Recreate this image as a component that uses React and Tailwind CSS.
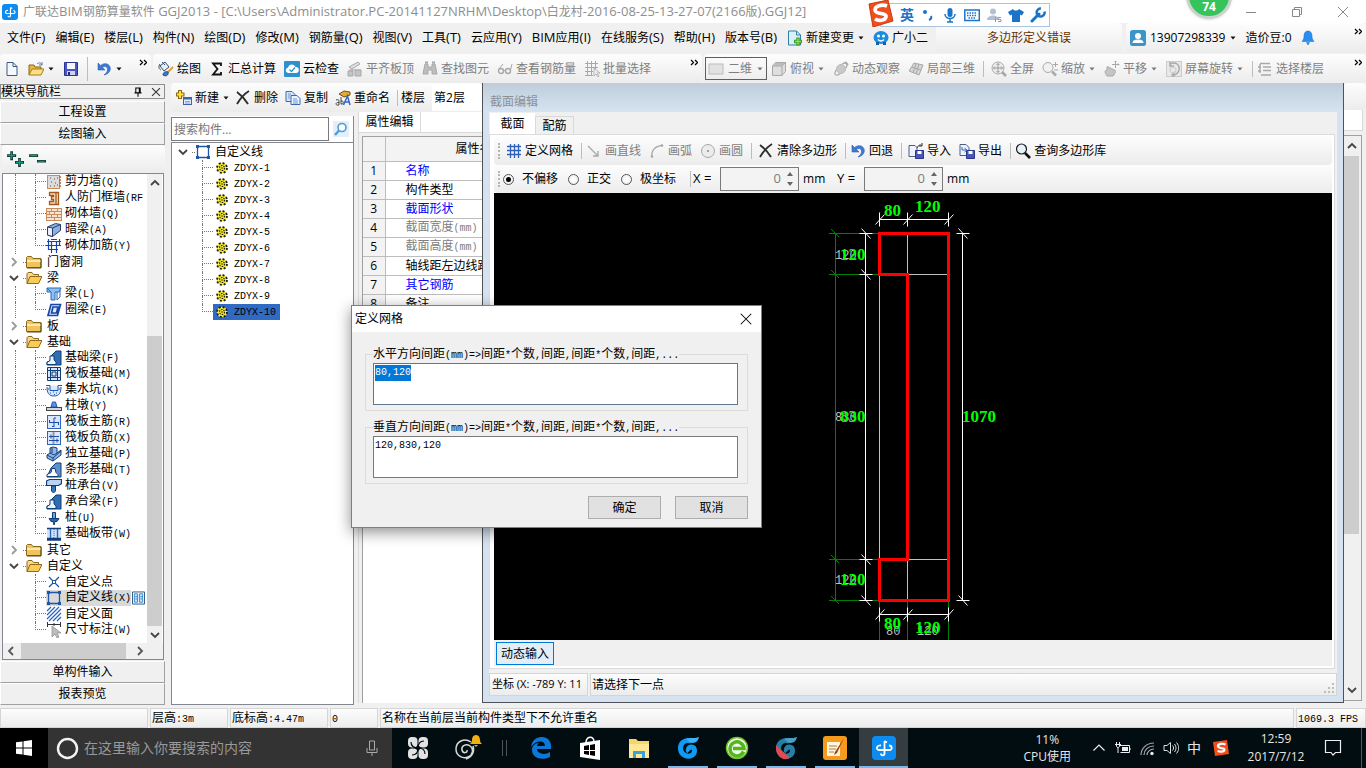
import React, { useEffect, useRef } from "react";

const UI = "font-['Open_Sans','Noto_Sans_CJK_SC',sans-serif]";
const GRAD = "bg-linear-to-b from-[#fdfdfd] to-[#ececec]";
const BAR = GRAD + " rounded-sm";

/* Splits a label into CJK and Latin runs so that each script keeps its own size */
function Runs({ children, latin }) {
  const runs = children.match(/[\x00-\x7f]+|[^\x00-\x7f]+/g) || [];
  return (
    <span className="whitespace-nowrap">
      {runs.map((r, i) =>
        r.charCodeAt(0) < 128 ? <span key={i} className={"whitespace-pre " + latin}>{r}</span> : <span key={i}>{r}</span>
      )}
    </span>
  );
}
const Song = ({ children }) => <Runs latin="font-['Liberation_Mono',monospace] text-[10px]">{children}</Runs>;
const Hei = ({ children }) => <Runs latin="text-[13px]">{children}</Runs>;

function Svg({ size = 16, children, className = "" }) {
  return (
    <svg width={size} height={size} viewBox="0 0 16 16" fill="none" className={"shrink-0 " + className} aria-hidden="true">
      {children}
    </svg>
  );
}

const G = "#a8a8a8";
const B = "#1f56a8";
const ICONS = {
  page: <path d="M3 1.500h6l4 4v9H3z M9 1.500v4h4" fill="#f4f9ff" stroke="#3c5a80" />,
  open: (
    <>
      <path d="M1 14V4h5l1 2h6v3" fill="#e9b64a" stroke="#8a6410" />
      <path d="M1 14l3-6h12l-3 6z" fill="#ffdf83" stroke="#a87a16" />
      <path d="M9 3c2-2 4-1 5 1m0-3v3h-3" stroke="#5578a8" />
    </>
  ),
  save: (
    <>
      <path d="M1.500 1.500h13v13h-13z" fill="#4a55c8" stroke="#2c348c" />
      <path d="M4 2h8v6H4z" fill="#f3f5ff" />
      <path d="M4 10h8v4H4z" fill="#cfd4ea" />
      <path d="M5 11h2v3H5z" fill="#23297a" />
    </>
  ),
  undo: <path d="M2 2v7h7L6.500 6.500C9 4.500 12 6 11.500 9c-.3 2-1.500 3.500-3.500 5 4-.8 6.500-3.500 6.300-6.800C14 3 9 1 4.500 4.500z" fill="#3f79d6" stroke="#2b5cae" strokeWidth=".6" />,
  brush: (
    <>
      <path d="M2 5l5-4 4 5-5 4z" fill="#e6eef6" stroke="#35506f" />
      <path d="M2 3C0 6 1 8 3 9M4 1l3 3" stroke="#35506f" />
      <path d="M15 6l-6 6" stroke="#e0a030" strokeWidth="2" />
      <path d="M5 14c0-3 3-4 5-3 1 3-2 5-5 3z" fill="#3b78c8" stroke="#234e8a" />
    </>
  ),
  sigma: <path d="M12 5V2.500H4L8.500 8 4 13.500h8V11" stroke="#111" strokeWidth="1.800" />,
  cloud: (
    <>
      <rect width="16" height="16" rx="1" fill="#2c92cf" />
      <path d="M4 12a2.800 2.800 0 0 1 0-5.500 4 4 0 0 1 7.600-.5A3 3 0 0 1 12 12z" fill="#fff" />
      <path d="M5.500 8.500l2 2 3.500-4" stroke="#2c92cf" strokeWidth="1.200" />
    </>
  ),
  slab: (
    <>
      <path d="M2 6l9-5 2 2-8 5z M2 9h12M5 8v3" fill="#ddd" stroke={G} />
      <path d="M1 10h5v5H1z M8 9h6v6H8z" fill="#c4c4c4" stroke={G} />
    </>
  ),
  binoc: (
    <>
      <path d="M3 3h3v3h4V3h3l2 10h-5V9H6v4H1z" fill="#bdbdbd" stroke={G} />
      <path d="M3 1.500h3M10 1.500h3" stroke={G} strokeWidth="2" />
    </>
  ),
  glasses: (
    <>
      <circle cx="4" cy="10" r="2.500" stroke={G} strokeWidth="1.400" />
      <circle cx="11" cy="10" r="2.500" stroke={G} strokeWidth="1.400" />
      <path d="M2 8L6 3M13.500 9L15 3M6.500 9.500h2" stroke={G} />
    </>
  ),
  batch: (
    <>
      <path d="M1 2.500h13M1 6.500h13M1 10.500h8M1 14.500h8M3.500 0v15M7.500 0v15M11.500 0v8" stroke={G} />
      <path d="M10 7v8l2-2 2 3 1-1-2-3h3z" fill="#eee" stroke={G} strokeWidth=".8" />
    </>
  ),
  flat: <rect x="1" y="3" width="14" height="10" fill="#e2e2e2" stroke="#bbb" />,
  cube: (
    <>
      <path d="M1.500 5l3-3.500h10v9l-3.500 4H1.500z" fill="#dedede" stroke={G} />
      <path d="M1.500 5h9.500v9.500M11 5l3.500-3.500" stroke={G} />
      <path d="M2 5h9l3-3H5z" fill="#bbb" />
    </>
  ),
  orbit: (
    <>
      <ellipse cx="8" cy="8" rx="8" ry="3" transform="rotate(-45 8 8)" stroke={G} />
      <circle cx="8" cy="8" r="4.500" fill="#c9c9c9" stroke="#bbb" />
      <path d="M12 1l3 3" stroke={G} strokeWidth="2" />
    </>
  ),
  part3d: (
    <>
      <path d="M1 10l5-8 9 2-4 10z" fill="#d5d5d5" stroke={G} />
      <path d="M4 6l9 3M8 3L5 12M11 3L8 13" stroke={G} />
    </>
  ),
  full: (
    <>
      <circle cx="7" cy="7" r="6" fill="#eee" stroke={G} />
      <path d="M7 2.500v9M2.500 7h9M5.500 4L7 2.500 8.500 4M5.500 10L7 11.500 8.500 10M4 5.500L2.500 7 4 8.500M10 5.500L11.500 7 10 8.500" stroke="#999" />
      <path d="M11 11l4 4" stroke={G} strokeWidth="2.500" />
    </>
  ),
  zoomio: (
    <>
      <circle cx="6" cy="6.500" r="5" fill="#f1f1f1" stroke={G} />
      <path d="M10 10.500l4 4" stroke={G} strokeWidth="2.500" />
      <path d="M11 3.500h5M13.500 1v5M12 9h4" stroke={G} />
    </>
  ),
  pan: (
    <>
      <path d="M3 15c-3-4-2-6 0-6V6c1-1 2 0 2 1 1-1 2 0 2 1 1-1 2 0 2 1 2-1 3 1 2 3l-2 3z" fill="#c5c5c5" stroke={G} />
      <path d="M11.500 0v7M8 3.500h7M10.500 1l1-1 1 1M14 2.500l1 1-1 1" stroke={G} />
    </>
  ),
  rot: (
    <>
      <rect x=".5" y=".5" width="15" height="15" fill="#e8e8e8" stroke="#ccc" />
      <path d="M4 3c6-3 10 1 9 6-1 3-3 5-6 5M4 1v4h4M9 11l-3 3 2 2" stroke={G} strokeWidth="1.400" />
      <circle cx="7" cy="9" r="3" stroke="#ccc" />
    </>
  ),
  floors: <path d="M3 2.500h10M6 6h8M6 9.500h8M4 14h10M3 3v9M1 6h3M1 10h3" stroke={G} strokeWidth="1.400" />,
  newitem: (
    <>
      <path d="M4 0v9M0 4.500h8.500" stroke="#8a6a10" strokeWidth="4" />
      <path d="M4 1v7M1 4.500h6.500" stroke="#ffdf3c" strokeWidth="2" />
      <rect x="7.500" y="7.500" width="8" height="7" fill="#e4eefb" stroke="#3d64a8" />
      <path d="M7.500 8.500h8" stroke="#3d64a8" strokeWidth="2" />
      <path d="M9 11.500h5M9 13h5" stroke="#8aa6d0" />
    </>
  ),
  del: <path d="M2 2c4 3 8 7 11 12M14 1C9 4 5 9 2 14" stroke="#2d2d2d" strokeWidth="1.900" />,
  copy: (
    <>
      <path d="M1 1.500h6l3 3v7H1z" fill="#d7e6fb" stroke="#3a69b4" />
      <path d="M6 5.500h6l3 3v6H6z" fill="#e9f2ff" stroke="#3a69b4" />
      <path d="M8 9h4M8 11h5M8 13h5M3 4h3M3 6h2M3 8h2" stroke="#6f98d6" />
    </>
  ),
  rename: (
    <>
      <path d="M4 4l5-3 6 1v3l-6 2z" fill="#e0a93a" stroke="#6f5315" />
      <path d="M8.500 15l4-9 2.500 9M9.500 12h5" stroke="#3667c0" strokeWidth="1.500" />
      <path d="M1 10c2-1 3 0 3 1v4c-4 1-4-3 0-2.500M6 7v7c3 1 3-4 0-3" stroke="#444" />
    </>
  ),
  grid: <path d="M1 3.500h14M1 7.500h14M1 11.500h14M4.500 1v14M8.500 1v14M12.500 1v14" stroke="#2d62b8" strokeWidth="1.300" />,
  line: <path d="M2 3l10 10M12 8v5H7" stroke={G} strokeWidth="1.300" />,
  arc: (
    <>
      <path d="M3 14C2 8 6 3 13 2.500" stroke={G} strokeWidth="1.300" />
      <circle cx="3" cy="13.500" r="1.300" fill={G} />
      <circle cx="13" cy="2.500" r="1.300" fill={G} />
    </>
  ),
  circle: (
    <>
      <circle cx="8" cy="8" r="6.500" fill="#ececec" stroke={G} />
      <circle cx="8" cy="8" r="1" fill="#888" />
    </>
  ),
  imp: (
    <>
      <path d="M1 2.500h6l2 2v9H1z" fill="#edf4ff" stroke="#4b5d80" />
      <path d="M7.500 7.500h8v8h-8z" fill="#4a55b8" stroke="#2c348c" />
      <path d="M9.500 8h4v3h-4z" fill="#fff" />
      <path d="M9 5c1-3 4-4 5-2M14 0v3h-3" stroke="#333" />
    </>
  ),
  exp: (
    <>
      <path d="M1 1.500h6l3 3v8H1z" fill="#edf4ff" stroke="#4b5d80" />
      <path d="M7.500 7.500h8v8h-8z" fill="#4a55b8" stroke="#2c348c" />
      <path d="M9.500 8h4v3h-4z" fill="#fff" />
      <path d="M3 4v3h4M5.500 5L8 7 5.500 9" stroke="#3a69b4" />
    </>
  ),
  find: (
    <>
      <circle cx="6.500" cy="6" r="5" fill="#e6f3fb" stroke="#1c1c1c" strokeWidth="1.200" />
      <path d="M10 10l5 5" stroke="#111" strokeWidth="2.600" />
    </>
  ),
  folder: (
    <>
      <path d="M.5 13.500v-10l1-1h4l1.500 2h8v9z" fill="#f2c35a" stroke="#8f6a1a" />
      <path d="M1 6h14v2H1z" fill="#ffe9ae" />
      <path d="M15 5v9H1" stroke="#5d4410" />
    </>
  ),
  folderOpen: (
    <>
      <path d="M1 13.500v-10l1-1h4l1.500 2h5v3" fill="#f6d98c" stroke="#8f6a1a" />
      <path d="M1 13.500l3-7h12l-3.500 7z" fill="#f9cb58" stroke="#8f6a1a" />
    </>
  ),
  wall: (
    <>
      <rect x="1.500" y="1.500" width="12" height="13" fill="#dcdcdc" stroke="#d08a50" />
      <path d="M4 4h1M8 5h1M11 4h1M5 8h1M9 9h1M4 12h1M8 12h1M11 11h1" stroke="#555" />
      <path d="M13 3h2M13 6h2M13 9h2M13 12h2" stroke="#c06020" strokeWidth="1.500" />
    </>
  ),
  door: <path d="M3.500 2.500h9v12h-9v-3h4v-2h-2v-3h2v-1h-4z M10 3v11" fill="#f6dcc0" stroke="#a5561c" strokeWidth="1.300" />,
  brick: (
    <>
      <rect x=".5" y="2.500" width="15" height="12" fill="#f9e4d2" stroke="#c98a5e" />
      <path d="M1 5.500h14M1 8.500h14M1 11.500h14M5.500 3v2.500M11.500 3v2.500M8.500 5.500v3M3.500 5.500v3M5.500 8.500v3M11.500 8.500v3M8.500 11.500v3" stroke="#c98a5e" />
    </>
  ),
  hidden: (
    <>
      <path d="M1.500 5l8-3.500 5 1v6l-8 6-5-1.500z" fill="#8fb0dc" stroke="#243f70" />
      <path d="M1.500 5l5 1v8.500l-5-1.500z" fill="#e9f0fa" stroke="#243f70" />
      <path d="M6.500 6l8-3.500" stroke="#243f70" />
    </>
  ),
  rebar: <path d="M2.500 1v11M5.500 3v12M10.500 3v12M13.500 1v7M1 3.500h14M0 7.500h15M3 11.500h9M5 1.500h6" stroke="#1846a8" strokeWidth="1.200" />,
  beam: (
    <>
      <path d="M1 2h14l-2 4H9v8H5V6H1z" fill="#8dc0f0" stroke="#2b69b8" />
      <path d="M11 6v8l3-3V4M1 2l4 4" stroke="#2b69b8" />
    </>
  ),
  ring: <path d="M5 2.500h9.500l-3 11H2z M7 5h5l-1.500 6h-5z" fill="#dceaff" stroke="#1846a8" strokeWidth="1.700" />,
  fbeam: (
    <>
      <path d="M5 6l5-5h5v14H1v-3l3-1z" fill="#2f6cb0" stroke="#123e78" />
      <path d="M1 14.500v-2l3-2V6h4v4l2 2v2.500z" fill="#eaf3ff" stroke="#123e78" />
    </>
  ),
  raft: <path d="M1.500 1.500h13v13h-13z M1 4.500h14M1 11.500h14M4.500 1v14M11.500 1v14M6 6h4v4H6z" fill="#d8e6fb" stroke="#123e78" />,
  pit: (
    <>
      <path d="M0 3.500h4v5h8v-5h4M1 5c0 6 2 9 7 9s7-3 7-9" fill="#dbe9ff" stroke="#1d55b0" />
      <path d="M4 11h1M7 10h1M10 11h1M8 12.500h1M13 7h1M2 7h1" stroke="#1d55b0" />
    </>
  ),
  pier: (
    <>
      <path d="M5 9l1.500-5h3L11 9z" fill="#5b94e0" stroke="#1d55b0" />
      <rect x=".5" y="9.500" width="15" height="3" fill="#d6d6d6" stroke="#444" />
    </>
  ),
  mainbar: (
    <>
      <rect x="1.500" y="1.500" width="13" height="13" fill="#dbe7fb" stroke="#2c62c0" />
      <path d="M3 8.500h10M8 4v9M8 4h2M6 12.500h2M3.500 6v2.500M12.500 8.500V11" stroke="#1d4ba8" />
    </>
  ),
  negbar: (
    <>
      <rect x="1.500" y="1.500" width="13" height="13" fill="#dbe7fb" stroke="#2c62c0" />
      <path d="M7.500 2v12" stroke="#9a9a9a" strokeWidth="2" />
      <path d="M3 6.500h10M3 10.500h10M5 4.500v4M11 8.500v4" stroke="#1d4ba8" />
    </>
  ),
  single: (
    <>
      <path d="M1 9l3-2V2l3-1 4 1v5l4-3v5l-8 6-6-3z" fill="#8fb8e8" stroke="#123e78" />
      <path d="M1 9l6 3 8-7M4 7l4 2 3-2M7 12v3M6 2v5" stroke="#123e78" />
    </>
  ),
  strip: (
    <>
      <path d="M5 6l5-5h5v14H1z" fill="#5d8fca" stroke="#123e78" />
      <path d="M1 14.500v-2l4-2 1-4h3l1 4 2 2v2z" fill="#fff" stroke="#123e78" />
    </>
  ),
  cap: (
    <>
      <path d="M.5 3l3-1.500h12v4l-3 2H.5z" fill="#b8d3f4" stroke="#123e78" strokeWidth="1.200" />
      <path d="M5.500 8h4v5l-2 2-2-2z" fill="#3c78c0" stroke="#123e78" />
    </>
  ),
  pile: (
    <>
      <path d="M6.500 2.500h3v6h-3z" fill="#6ea3e0" stroke="#123e78" />
      <path d="M3 8.500h10l-2 3H9l-1 3.500-1-3.500H5z" fill="#2b62a8" stroke="#123e78" />
    </>
  ),
  band: (
    <>
      <rect x="1" y="2" width="14" height="12" fill="#cfe2ff" />
      <path d="M1 2.500h14M1 12.500h14M1 14h14" stroke="#123e78" strokeWidth="1.500" />
      <path d="M4.500 3v9M11.500 3v9" stroke="#2c62c0" strokeWidth="1.400" />
      <path d="M8 3v9" stroke="#2c62c0" strokeDasharray="1 1" />
    </>
  ),
  cpoint: (
    <>
      <path d="M3 3l10 10M13 3L3 13" stroke={B} strokeWidth="1.300" />
      <rect x="6.500" y="6.500" width="3" height="3" fill="#fff" stroke={B} />
    </>
  ),
  cline: (
    <>
      <path d="M2.500 2.500h11v11h-11z" stroke={B} strokeWidth="1.300" />
      <path d="M1 1h3v3H1zM12 1h3v3h-3zM1 12h3v3H1zM12 12h3v3h-3z" fill={B} />
    </>
  ),
  carea: <path d="M1 5l4-4M1 9l8-8M1 13L13 1M3 15L15 3M7 15l8-8M11 15l4-4" stroke="#2c62c0" strokeWidth="1.200" />,
  dim: (
    <>
      <path d="M1.500 0v5M14.500 0v5M1 2.500h14M8 1v3" stroke="#333" />
      <path d="M6 4v11l3-3 2 4 2-1-2-4h4z" fill="#bdbdbd" stroke="#8a8a8a" strokeWidth=".7" />
    </>
  ),
  gear: (
    <>
      <circle cx="8" cy="8" r="7" fill="#f4ea2a" />
      <circle cx="8" cy="8" r="6.600" stroke="#151515" strokeWidth="2.400" strokeDasharray="2.600 2.580" />
      <circle cx="8" cy="8" r="3.300" stroke="#151515" strokeDasharray="2 1.450" strokeWidth="1.500" />
      <circle cx="8" cy="8" r="1" fill="#151515" />
    </>
  ),
  newchg: (
    <>
      <path d="M1.500 1h8l4 4v10h-12z" fill="#d9f0fb" stroke="#2d7ea8" />
      <path d="M9.500 1v4h4" stroke="#2d7ea8" />
      <path d="M11 7.500v8M7 11.500h8" stroke="#3f9c24" strokeWidth="3.500" />
      <path d="M11 8.500v6M8 11.500h6" stroke="#86d95c" strokeWidth="1.500" />
    </>
  ),
  robot: (
    <>
      <ellipse cx="8" cy="7.500" rx="7.500" ry="6.500" fill="#1a8de0" />
      <path d="M3 12h3v3H3zM10 12h3v3h-3z" fill="#0d62b0" />
      <circle cx="5.500" cy="6" r="1.500" fill="#fff" />
      <circle cx="10.500" cy="6" r="1.500" fill="#fff" />
      <path d="M5 9.500c2 2 4 2 6 0" stroke="#fff" strokeWidth="1.200" />
    </>
  ),
  user: (
    <>
      <rect width="16" height="16" rx="2.500" fill="#3b95c9" />
      <circle cx="8" cy="6" r="3" fill="#fff" />
      <path d="M2.500 13c0-3 3-3.500 5.500-3.500s5.500.5 5.500 3.500z" fill="#fff" />
    </>
  ),
  bell: <path d="M8 1c-3 0-4 2.500-4 5 0 3-1 4-2 5.500h12C13 10 12 9 12 6c0-2.500-1-5-4-5zM6.500 12.500L8 15l1.500-2.500z" fill="#2a8df0" stroke="#1a6cc8" strokeWidth=".5" />,
  ggj: (
    <>
      <rect width="16" height="16" rx="3" fill="#0c8bf0" />
      <path d="M6 6.500C3.500 6 2.500 9 4.500 9.500h7c2 0 2-3-.2-3M8.500 3.500v8.300c0 1.600-2.500 1.600-2.500 0M8.500 3.500l1.800 1" stroke="#fff" strokeWidth="1.200" />
    </>
  ),
};
const Icon = ({ n, size }) => <Svg size={size}>{ICONS[n]}</Svg>;

const Caret = ({ dim }) => (
  <svg width="8" height="8" viewBox="0 0 8 8" className="shrink-0" aria-hidden="true">
    <path d="M1.500 2.500h5L4 5.500z" fill={dim ? "#777" : "#111"} />
  </svg>
);
const More = () => (
  <svg width="8" height="8" viewBox="0 0 8 8" fill="none" className="shrink-0" aria-hidden="true">
    <path d="M1 1l2.500 2.500L1 6M5 1l2.500 2.500L5 6" stroke="#000" strokeWidth="1.300" />
  </svg>
);
const Sep = ({ h = "h-4" }) => <span className={"w-px shrink-0 bg-[#bdbdbd] " + h} />;
const Chev = ({ d = "down", c = "#444" }) => {
  const p = { down: "M2 4l4 4 4-4", up: "M2 8l4-4 4 4", left: "M8 2L4 6l4 4", right: "M4 2l4 4-4 4" }[d];
  return (
    <svg width="12" height="12" viewBox="0 0 12 12" fill="none" className="shrink-0" aria-hidden="true">
      <path d={p} stroke={c} strokeWidth="1.800" />
    </svg>
  );
};

function Tool({ icon, children, dim, caret }) {
  return (
    <button className={"flex shrink-0 items-center gap-[3px] whitespace-nowrap " + (dim ? "text-[#7f7f7f]" : "text-black")}>
      {icon && <Icon n={icon} />}
      {children}
      {caret && <Caret dim={dim} />}
    </button>
  );
}

function TitleBar() {
  return (
    <header className="flex h-[23px] shrink-0 items-center gap-[5px] bg-white pl-0.5 text-[#8e8e8e]">
      <Icon n="ggj" />
      <h1 className="flex-1 overflow-hidden">
        <Hei>广联达BIM钢筋算量软件 GGJ2013 - [C:\Users\Administrator.PC-20141127NRHM\Desktop\白龙村-2016-08-25-13-27-07(2166版).GGJ12]</Hei>
      </h1>
      <div className="flex w-[138px] shrink-0 items-center">
        {["M3 8.500h10", "M3.500 5.500h7v7h-7zM5.500 5V3.500h7v7H11", "M3 3l10 10M13 3L3 13"].map((d, i) => (
          <button key={i} aria-label={["最小化", "还原", "关闭"][i]} className="flex w-[46px] justify-center">
            <Svg><path d={d} stroke="#888" /></Svg>
          </button>
        ))}
      </div>
    </header>
  );
}

function MenuBar() {
  const items = ["文件(F)", "编辑(E)", "楼层(L)", "构件(N)", "绘图(D)", "修改(M)", "钢筋量(Q)", "视图(V)", "工具(T)", "云应用(Y)", "BIM应用(I)", "在线服务(S)", "帮助(H)", "版本号(B)"];
  return (
    <nav className="flex h-[30px] shrink-0 items-center bg-[#f0f0f0]">
      <div className="flex shrink-0 items-center gap-[10px] pl-[7px]">
        {items.map((t) => (
          <button key={t}><Hei>{t}</Hei></button>
        ))}
      </div>
      <div className="ml-2.5 flex w-[149px] shrink-0 items-center gap-2">
        <button className="flex items-center gap-[3px] whitespace-nowrap"><Icon n="newchg" />新建变更<Caret /></button>
        <button className="flex items-center gap-[3px] whitespace-nowrap"><Icon n="robot" />广小二</button>
      </div>
      <div className={"flex h-full flex-1 items-center justify-center whitespace-nowrap text-[#663300] " + BAR}><Song>多边形定义错误</Song></div>
      <div className={"ml-1 flex h-full w-60 shrink-0 items-center gap-1 pl-1 whitespace-nowrap " + BAR}>
        <Icon n="user" />
        <button className="flex items-center gap-1">13907298339 <Caret /></button>
        <span className="ml-1">造价豆:0</span>
        <button aria-label="通知" className="ml-1"><Icon n="bell" /></button>
        <button aria-label="更多" className="mr-1 mb-3 ml-auto"><More /></button>
      </div>
    </nav>
  );
}

function MainToolbar() {
  return (
    <div className="flex h-[30px] shrink-0 items-stretch gap-0.5 pt-px">
      <div className={"flex w-[151px] shrink-0 items-center gap-2 pl-1 " + BAR}>
        <Tool icon="page" />
        <Tool icon="open" caret />
        <Tool icon="save" />
        <Sep h="h-6" />
        <Tool icon="undo" caret />
        <button aria-label="更多" className="mr-1 mb-3 ml-auto"><More /></button>
      </div>
      <div className={"flex w-[549px] shrink-0 items-center gap-2 pl-[5px] " + BAR}>
        <Tool icon="brush">绘图</Tool>
        <Tool icon="sigma">汇总计算</Tool>
        <Tool icon="cloud">云检查</Tool>
        <Tool icon="slab" dim>平齐板顶</Tool>
        <Tool icon="binoc" dim>查找图元</Tool>
        <Tool icon="glasses" dim>查看钢筋量</Tool>
        <Tool icon="batch" dim>批量选择</Tool>
        <button aria-label="更多" className="mr-1 mb-3 ml-auto"><More /></button>
      </div>
      <div className={"flex flex-1 items-center gap-2 overflow-hidden pl-px " + BAR}>
        <label className="-mr-1 flex h-[23px] w-[62px] shrink-0 items-center border border-[#5f5f5f] pl-0.5 text-[#7f7f7f]">
          <Icon n="flat" />
          <select aria-label="视图模式" className="w-8 appearance-none bg-transparent pl-1"><option>二维</option></select>
          <Caret dim />
        </label>
        <Tool icon="cube" dim caret>俯视</Tool>
        <Tool icon="orbit" dim>动态观察</Tool>
        <Tool icon="part3d" dim>局部三维</Tool>
        <Sep />
        <span className="-ml-px"><Tool icon="full" dim>全屏</Tool></span>
        <Tool icon="zoomio" dim caret>缩放</Tool>
        <Tool icon="pan" dim caret>平移</Tool>
        <Tool icon="rot" dim caret>屏幕旋转</Tool>
        <Sep />
        <span className="-ml-1"><Tool icon="floors" dim>选择楼层</Tool></span>
        <button aria-label="更多" className="mr-1 mb-3 ml-auto"><More /></button>
      </div>
    </div>
  );
}

const TREE = [
  { kids: [["wall", "剪力墙(Q)"], ["door", "人防门框墙(RF"], ["brick", "砌体墙(Q)"], ["hidden", "暗梁(A)"], ["rebar", "砌体加筋(Y)"]] },
  { name: "门窗洞" },
  { name: "梁", kids: [["beam", "梁(L)"], ["ring", "圈梁(E)"]] },
  { name: "板" },
  {
    name: "基础",
    kids: [["fbeam", "基础梁(F)"], ["raft", "筏板基础(M)"], ["pit", "集水坑(K)"], ["pier", "柱墩(Y)"], ["mainbar", "筏板主筋(R)"], ["negbar", "筏板负筋(X)"], ["single", "独立基础(P)"], ["strip", "条形基础(T)"], ["cap", "桩承台(V)"], ["fbeam", "承台梁(F)"], ["pile", "桩(U)"], ["band", "基础板带(W)"]],
  },
  { name: "其它" },
  { name: "自定义", tail: true, kids: [["cpoint", "自定义点"], ["cline", "自定义线(X)"], ["carea", "自定义面"], ["dim", "尺寸标注(W)"]] },
];

const Branch = ({ last }) => (
  <span className="flex h-4 w-[11px] shrink-0 flex-col">
    <span className="h-2 border-b border-l border-dotted border-[#777]" />
    {!last && <span className="h-2 border-l border-dotted border-[#777]" />}
  </span>
);

function NavPanel() {
  const bar = "flex h-[22px] shrink-0 items-center justify-center border border-white border-r-[#a0a0a0] border-b-[#a0a0a0] bg-[#f0f0f0]";
  return (
    <aside className="flex w-[165px] shrink-0 flex-col pt-px">
      <div className="flex h-[15px] shrink-0 items-center border border-[#8d8d8d]">
        <h2 className="flex-1 leading-3">模块导航栏</h2>
        <button aria-label="固定" className="mr-1"><Svg size={14}><path d="M4 9h8M5.500 9V3.500h5V9M9.500 4v5M8 9v4.500" stroke="#000" strokeWidth="1.200" /></Svg></button>
        <button aria-label="关闭" className="mr-px"><Svg size={14}><path d="M3.500 3.500l9 9M12.500 3.500l-9 9" stroke="#333" strokeWidth="1.200" /></Svg></button>
      </div>
      <button className={bar + " mt-0.5"}>工程设置</button>
      <button className={bar}>绘图输入</button>
      <div className={"ml-0.5 flex h-[28px] shrink-0 items-center gap-1 pl-1 " + BAR}>
        <button aria-label="全部展开"><Svg size={18}><path d="M1 5h8M5 1v8M8 11h8M12 7v8" stroke="#0a3a30" strokeWidth="2.400" /><path d="M2 5h6M5 2v6M9 11h6M12 8v6" stroke="#1a9a84" /></Svg></button>
        <button aria-label="全部折叠"><Svg size={18}><path d="M1 5h8M8 10h8" stroke="#0a3a30" strokeWidth="2.400" /><path d="M2 5h6M9 10h6" stroke="#1a9a84" /></Svg></button>
      </div>
      <div className="mr-px ml-0.5 flex min-h-0 flex-1 flex-col border border-[#828790] bg-white">
        <div className="flex min-h-0 flex-1">
          <ul className="flex-1 overflow-hidden leading-4">
            {TREE.map((g, gi) => (
              <li key={gi}>
                {g.name && (
                  <div className="flex h-4 items-center pl-[5px]">
                    <Chev d={g.kids ? "down" : "right"} c={g.kids ? "#444" : "#9a9a9a"} />
                    <span className="ml-[3px] w-[3px] border-t border-dotted border-[#777]" />
                    <Icon n={g.kids ? "folderOpen" : "folder"} />
                    <span className="ml-[5px]">{g.name}</span>
                  </div>
                )}
                {g.kids && (
                  <ul>
                    {g.kids.map(([ic, t], i) => {
                      const sel = t.startsWith("自定义线");
                      return (
                        <li key={t} className="flex h-4 items-center pl-3">
                          <span className={"h-4 w-5 shrink-0 " + (g.tail ? "" : "border-l border-dotted border-[#777]")} />
                          <Branch last={i === g.kids.length - 1} />
                          <span className={"flex h-4 items-center gap-[3px] " + (sel ? "bg-[#d9d9d9]" : "")}>
                            <Icon n={ic} />
                            <Song>{t}</Song>
                          </span>
                          {sel && (
                            <svg width="13" height="14" viewBox="0 0 14 14" className="ml-px shrink-0" aria-hidden="true">
                              <path d="M.5.500h13v13H.5z" fill="#fff" stroke="#1f4f7a" />
                              <path d="M2.500 2.500h3.500v9H2.500zM8 2.500h3.500v9H8z" fill="#cfe6fa" stroke="#2b84d0" />
                              <path d="M3.500 5.500h2M3.500 8h2M9 5.500h2M9 8h2" stroke="#2b84d0" />
                            </svg>
                          )}
                        </li>
                      );
                    })}
                  </ul>
                )}
              </li>
            ))}
          </ul>
          <div className="mr-px flex w-[15px] shrink-0 flex-col items-center bg-[#f0f0f0]">
            <span className="flex h-[17px] items-center"><Chev d="up" /></span>
            <span className="flex-9" />
            <span className="w-full flex-[18] bg-[#cdcdcd]" />
            <span className="flex h-[17px] items-center"><Chev d="down" /></span>
          </div>
        </div>
        <div className="flex h-4 shrink-0 items-center bg-[#f0f0f0] pr-[17px] pl-0.5">
          <Chev d="left" c="#555" />
          <span className="ml-1 h-full flex-1 bg-[#cdcdcd]" />
          <span className="ml-2 flex"><Chev d="right" c="#555" /></span>
        </div>
      </div>
      <button className={bar + " mt-px"}>单构件输入</button>
      <button className={bar}>报表预览</button>
    </aside>
  );
}

function ComponentList() {
  return (
    <section className="mt-1 flex w-[183px] shrink-0 flex-col">
      <div className="flex h-[26px] shrink-0 items-center border-r border-[#8a8a8a] bg-white">
        <input aria-label="搜索构件" placeholder="搜索构件..." className="h-6 w-[158px] border border-[#7a7a7a] bg-white px-0.5 outline-none placeholder:text-[#777]" />
        <button aria-label="搜索" className="ml-1 bg-[#e3f0fb]">
          <Svg><circle cx="9" cy="6.500" r="4" stroke="#4c9bdc" strokeWidth="1.600" fill="#fff" /><path d="M6 9.500L2 14" stroke="#4c9bdc" strokeWidth="2.400" /></Svg>
        </button>
      </div>
      <div className="flex-1 border border-[#828790] bg-white pt-px leading-4">
        <div className="flex h-4 items-center pl-[5px]">
          <Chev /><span className="ml-[3px] w-[3px] border-t border-dotted border-[#777]" />
          <Icon n="cline" /><span className="ml-1">自定义线</span>
        </div>
        <ul className="pl-[30px]">
          {Array.from({ length: 10 }, (_, i) => (
            <li key={i} className="flex h-4 items-center">
              <Branch last={i === 9} />
              <button className={"flex h-4 items-center gap-[6px] pr-1 pl-[3px] " + (i === 9 ? "bg-[#316ac5]" : "")}>
                <Icon n="gear" size={12} />
                <Song>{"ZDYX-" + (i + 1)}</Song>
              </button>
            </li>
          ))}
        </ul>
      </div>
    </section>
  );
}

const PROPS = [["名称", "text-[#0000ff]"], ["构件类型", ""], ["截面形状", "text-[#0000ff]"], ["截面宽度(mm)", "text-[#808080]"], ["截面高度(mm)", "text-[#808080]"], ["轴线距左边线距", ""], ["其它钢筋", "text-[#0000ff]"], ["备注", ""]];

function PropertyPanel() {
  return (
    <section className="mb-0.5 ml-1 flex min-w-0 flex-1 flex-col overflow-hidden border-l border-[#d9d9d9] bg-[#f0f0f0]">
      <div className="flex h-[21px] shrink-0 items-end border-b border-[#d9d9d9] bg-white">
        <button className="h-[21px] w-[62px] shrink-0 border-r border-[#d9d9d9] bg-white whitespace-nowrap">属性编辑</button>
      </div>
      <div className="mt-[3px] ml-[3px] flex-1 border-t border-l border-[#a0a0a0] bg-white">
        <table className="w-full table-fixed border-collapse">
          <colgroup><col className="w-[22px]" /><col /></colgroup>
          <thead>
            <tr className="h-[24px]">
              <th aria-label="序号" className="border-r border-b border-[#bdbdbd] bg-[#f3f3f3]" />
              <th className="overflow-hidden border-b border-[#bdbdbd] bg-[#f3f3f3] pl-[70px] text-left font-normal whitespace-nowrap">属性名称</th>
            </tr>
          </thead>
          <tbody>
            {PROPS.map(([t, c], i) => (
              <tr key={t} className="h-[19px]">
                <td className="border-r border-b border-[#bdbdbd] bg-[#f3f3f3] text-center leading-4">{i + 1}</td>
                <td className={"overflow-hidden border-b border-[#bdbdbd] pl-5 leading-4 whitespace-nowrap " + c}><Song>{t}</Song></td>
              </tr>
            ))}
          </tbody>
        </table>
      </div>
    </section>
  );
}

/* Section drawing: every coordinate is in canvas pixels */
function SectionCanvas() {
  const vt = (x, y) => <path key={`v${x}-${y}`} d={`M${x} ${y - 7}v14M${x - 4} ${y + 5}l9-10`} />;
  const ht = (x, y) => <path key={`h${x}-${y}`} d={`M${x - 6} ${y}h13M${x - 4} ${y - 5}l9 10`} />;
  const big = "fill-[#00ff00] font-['Liberation_Serif',serif] text-[17px] font-bold";
  const small = "fill-[#c0c0c0] font-['Liberation_Mono',monospace] text-[12px]";
  return (
    <svg className="min-h-0 w-full flex-1 bg-black" role="img" aria-label="截面草图" fill="none">
      <g stroke="#008000" shapeRendering="crispEdges">
        <path d="M341.500 40v368M335 40.500h51M335 81.500h51M335 366.500h51M335 407.500h51M385.500 408v60M413.500 408v60M454.500 408v60" />
        {[40, 81, 366, 407].map((y) => <path key={y} d={`M337 ${y - 4}l8 8`} />)}
      </g>
      <path d="M385.500 81v286M413.500 40v368M413 81.500h42M413 366.500h42" stroke="#c0c0c0" />
      <text x="341" y="66" className={small}>120</text>
      <text x="341" y="228" className={small}>830</text>
      <text x="341" y="391" className={small}>120</text>
      <text x="392" y="442" className={small}>80</text>
      <text x="423" y="442" className={small}>120</text>
      <path d="M385.500 40.500h69v367h-69v-41h28v-285h-28z" stroke="#ff0000" strokeWidth="3" />
      <g stroke="#ffffff">
        <path d="M385 26.500h70M385 421.500h70M371.500 40v368M468.500 40v368" />
        {[385.5, 413.5, 454.5].flatMap((x) => [vt(x, 26.5), vt(x, 421.5)])}
        {[40.5, 81.5, 366.5, 407.5].map((y) => ht(371.5, y))}
        {[40.5, 407.5].map((y) => ht(468.5, y))}
      </g>
      <text x="390" y="23" className={big}>80</text>
      <text x="421" y="19" className={big}>120</text>
      <text x="346" y="67" className={big}>120</text>
      <text x="346" y="229" className={big}>830</text>
      <text x="468" y="229" className={big}>1070</text>
      <text x="346" y="392" className={big}>120</text>
      <text x="390" y="436" className={big}>80</text>
      <text x="421" y="440" className={big}>120</text>
    </svg>
  );
}

const Grip = () => <span className="mr-[3px] h-4 shrink-0 border-l-2 border-dotted border-[#b5b5b5]" />;

function Spin({ id, label }) {
  return (
    <span className="flex items-center">
      <label htmlFor={id} className="w-[27px] whitespace-pre text-[13px]">{label} =</label>
      <span className="flex h-6 w-[79px] border border-[#7a7a7a] bg-[#f3f3f3]">
        <input id={id} defaultValue="0" className="w-[60px] bg-transparent text-right text-[13px] text-[#7d7d7d] outline-none" />
        <span className="flex flex-1 flex-col items-center justify-between py-1">
          <button aria-label={label + " 增加"} className="flex"><svg width="6" height="4" viewBox="0 0 6 4"><path d="M0 4h6L3 0z" fill="#666" /></svg></button>
          <button aria-label={label + " 减少"} className="flex"><svg width="6" height="4" viewBox="0 0 6 4"><path d="M0 0h6L3 4z" fill="#666" /></svg></button>
        </span>
      </span>
      <span className="ml-1 w-[34px]">mm</span>
    </span>
  );
}

function SectionWindow() {
  return (
    <section className="mb-0.5 flex w-[862px] shrink flex-col border-x border-b border-[#4f5358] bg-[#d6e2f0] px-1.5 pb-1.5">
      <h2 className="-mx-1.5 flex h-[29px] shrink-0 items-center bg-linear-to-b from-[#bfccda] to-[#d6e3f0] pt-2 pl-[7px] text-[#8c9096]">截面编辑</h2>
      <div className="flex min-h-0 flex-1 flex-col bg-[#f0f0f0]">
        <div className="flex h-[22px] shrink-0 items-end pt-0.5 pl-px">
          <button className="h-[21px] w-[45px] bg-white">截面</button>
          <button className="h-[18px] w-[39px] border border-b-0 border-[#d9d9d9] bg-[#f0f0f0]">配筋</button>
        </div>
        <div className="mr-0.5 flex min-h-0 flex-1 flex-col border border-[#dcdcdc] bg-white pt-px pr-0.5 pb-0.5 pl-1">
          <div className={"flex h-[29px] shrink-0 items-center gap-2 pl-1 " + BAR}>
            <span className="-mr-[5px] flex"><Grip /></span>
            <Tool icon="grid">定义网格</Tool>
            <Sep />
            <span className="-ml-1"><Tool icon="line" dim>画直线</Tool></span>
            <Tool icon="arc" dim>画弧</Tool>
            <Tool icon="circle" dim>画圆</Tool>
            <Sep />
            <span className="-ml-0.5"><Tool icon="del">清除多边形</Tool></span>
            <Sep />
            <span className="-ml-1"><Tool icon="undo">回退</Tool></span>
            <Sep />
            <span className="-ml-0.5"><Tool icon="imp">导入</Tool></span>
            <Tool icon="exp">导出</Tool>
            <Sep />
            <span className="-ml-1"><Tool icon="find">查询多边形库</Tool></span>
          </div>
          <div className={"flex h-[28px] shrink-0 items-center pl-1 " + BAR}>
            <Grip />
            {["不偏移", "正交", "极坐标"].map((t, i) => (
              <label key={t} className="mr-2.5 flex shrink-0 items-center gap-2 whitespace-nowrap">
                <input type="radio" name="offset" defaultChecked={i === 0} className="m-0 size-[11px] appearance-none rounded-full border border-[#555] bg-white bg-clip-content p-0.5 checked:bg-black" />
                {t}
              </label>
            ))}
            <span className="mr-0.5 ml-1 flex"><Sep /></span>
            <Spin id="off-x" label="X" />
            <Spin id="off-y" label="Y" />
          </div>
          <SectionCanvas />
          <div className="h-[26px] shrink-0 bg-[#f0f0f0] pt-0.5 pl-0.5">
            <button className="block h-[23px] w-[58px] border border-[#0078d7] bg-[#e3eef8] whitespace-nowrap">动态输入</button>
          </div>
        </div>
        <div className="mt-1 flex h-[23px] shrink-0 gap-0.5 whitespace-nowrap">
          <span className={"flex w-[99px] items-center overflow-hidden border border-[#d5d5d5] pl-0.5 text-[11px] " + GRAD}>坐标 (X: -789 Y: 11</span>
          <span className={"flex flex-1 items-center border border-[#d5d5d5] pl-px " + GRAD}>
            请选择下一点
            <svg width="12" height="12" viewBox="0 0 12 12" className="mt-1.5 mr-px ml-auto" aria-hidden="true">
              <path d="M9 1h2v2H9zM5 5h2v2H5zM9 5h2v2H9zM1 9h2v2H1zM5 9h2v2H5zM9 9h2v2H9z" fill="#bdbdbd" />
            </svg>
          </span>
        </div>
      </div>
    </section>
  );
}

function GridDialog() {
  const ref = useRef(null);
  useEffect(() => {
    ref.current.focus();
    ref.current.select();
  }, []);
  const box = "block h-[42px] w-full resize-none overflow-hidden border bg-white px-px py-px font-['Liberation_Mono',monospace] text-[10px] leading-4 outline-none selection:bg-[#0078d7] selection:text-white";
  const group = "h-[66px] border border-[#dcdcdc] pr-[9px] pb-1 pl-[7px]";
  const btn = "h-[23px] w-[73px] border border-[#adadad] bg-[#e1e1e1]";
  const hint = "方向间距(mm)=>间距*个数,间距,间距*个数,间距,...";
  return (
    <div role="dialog" aria-label="定义网格" className="absolute top-[305px] left-[351px] w-[411px] border border-[#3091ee] bg-[#f0f0f0] shadow-[0_4px_14px_rgba(0,0,0,0.45)]">
      <div className="flex h-[26px] items-center justify-between bg-white pr-2 pl-[3px]">
        <h2>定义网格</h2>
        <button aria-label="关闭"><Svg size={14}><path d="M2 2l12 12M14 2L2 14" stroke="#000" strokeWidth="1.200" /></Svg></button>
      </div>
      <div className="px-[13px] pt-[13px] pb-2">
        <fieldset className={group}>
          <legend className="h-[18px] leading-[18px]"><label htmlFor="gx"><Song>{"水平" + hint}</Song></label></legend>
          <textarea id="gx" ref={ref} defaultValue="80,120" className={box + " border-[#60788f]"} />
        </fieldset>
        <fieldset className={group + " mt-[7px]"}>
          <legend className="h-[18px] leading-[18px]"><label htmlFor="gy"><Song>{"垂直" + hint}</Song></label></legend>
          <textarea id="gy" defaultValue="120,830,120" className={box + " border-[#7a7a7a]"} />
        </fieldset>
        <div className="mt-3 flex justify-end gap-[14px]">
          <button className={btn}>确定</button>
          <button className={btn}>取消</button>
        </div>
      </div>
    </div>
  );
}

function InputMethodBar() {
  return (
    <div className="absolute top-0 right-[316px] flex items-center text-[#1c74c8]">
      <svg width="28" height="27" viewBox="0 0 28 27" className="relative z-10 -mr-[14px]" aria-hidden="true">
        <path d="M3 4L22 0l5 21L7 27z" fill="#f04e1c" stroke="#c83a10" />
        <path d="M21 6C16 4 9 6 9 10c0 5 12 2 11 7-1 4-8 4-11 2" fill="none" stroke="#fff" strokeWidth="3.600" />
      </svg>
      <div className="mt-[3px] flex h-6 w-[170px] items-center gap-[6px] border border-[#a9c4dd] bg-white pl-[19px]">
        <span className="text-sm leading-4 font-bold">英</span>
        <Svg><circle cx="5" cy="5" r="2" fill="#1c74c8" /><path d="M11 9c1 2 0 3-2 4" stroke="#1c74c8" strokeWidth="2" /></Svg>
        <Svg><rect x="5.500" y="1" width="5" height="9" rx="2.500" fill="#1c74c8" /><path d="M3 7c0 6 10 6 10 0M8 12v3M5 15h6" stroke="#1c74c8" strokeWidth="1.500" /></Svg>
        <Svg><rect x=".8" y="3" width="14.500" height="10.500" fill="#fff" stroke="#1c74c8" strokeWidth="1.500" /><path d="M3 6h10M3 8.500h10M4.500 11h7" stroke="#1c74c8" strokeWidth="1.500" strokeDasharray="1.500 1" /></Svg>
        <Svg><circle cx="7" cy="4.500" r="3" fill="#b4bfd4" /><path d="M1 13c0-6 12-6 12 0z" fill="#b4bfd4" /><path d="M9.500 10v5M15 10.500h-3v2h3v2h-3" stroke="#8f9cb8" /></Svg>
        <Svg><path d="M5 2c1 2 5 2 6 0l5 3-2 3.500-2-1V15H4V7.500l-2 1L0 5z" fill="#1c74c8" /></Svg>
        <Svg><path d="M2 14l7-7" stroke="#1c74c8" strokeWidth="3" strokeLinecap="round" /><path d="M14.500 4.500A4 4 0 1 1 11 1.500" stroke="#1c74c8" strokeWidth="2.500" /></Svg>
      </div>
    </div>
  );
}

function StatusBar() {
  const cell = "flex items-center border border-[#d5d5d5] pl-px " + GRAD;
  return (
    <footer className="flex h-[23px] shrink-0 items-stretch gap-0.5 overflow-hidden bg-[#f0f0f0] pt-[3px] whitespace-nowrap">
      <span className={cell + " w-[148px]"} />
      <span className={cell + " w-[78px]"}><Song>层高:3m</Song></span>
      <span className={cell + " w-[98px]"}><Song>底标高:4.47m</Song></span>
      <span className={cell + " w-[48px]"}><Song>0</Song></span>
      <span className={cell + " flex-1"}><Song>名称在当前层当前构件类型下不允许重名</Song></span>
      <span className={cell + " w-[70px]"}><Song>1069.3 FPS</Song></span>
    </footer>
  );
}

const swirl = "M15 5C8 3 4 8 4.500 13c.5 6 7 8.500 11 6.500s4-8 0-8.500c-3 0-4 3-2.500 4.500";
const crest = "M10 3c4-2 8 0 13-2-1 5-4 6-8 6z";
function Taskbar() {
  const apps = [
    ["Edge", "", <path d="M2 11C3 3 9 1 13 1c6 0 10 5 9 12H8c0 4 7 7 13 3v5c-8 4-18 1-18-7 0-4 3-7 7-7-1 1-2 2-2 3h8c0-6-9-6-14 1z" fill="#0b78d8" />],
    ["应用商店", "", <><path d="M2 7l20-3v20L2 21z" fill="#fff" /><path d="M8 7c0-7 8-8 8-1" stroke="#fff" fill="none" strokeWidth="1.500" /><path d="M6 10l5-1v5H6zM12 9l5-1v6h-5zM6 15h5v4l-5-1zM12 15h5v5l-5-1z" fill="#000" /></>],
    ["文件资源管理器", "", <><path d="M2 3h7l2 2h11v17H2z" fill="#f7d56c" /><path d="M2 8h20v14H2z" fill="#ffe794" /><path d="M6 22v-7h12v7h-3v-4H9v4z" fill="#36a2e0" /></>],
    ["广联达", "u", <><path d={swirl} fill="none" stroke="#0f9bf5" strokeWidth="5" /><path d={crest} fill="#3ab4fa" /></>],
    ["浏览器", "u", <><circle cx="12" cy="12" r="10.500" fill="#f2fbe9" stroke="#6cc32c" strokeWidth="1.500" /><path d="M18.500 15.500A7 7 0 1 1 19 12.500H8" fill="none" stroke="#54b61e" strokeWidth="3.500" /></>],
    ["广联达助手", "u", <><path d={swirl} fill="none" stroke="#2580a8" strokeWidth="5" /><path d={crest} fill="#4aa0c4" /><path d="M2 9l14 13c-8 4-15-3-14-13z" fill="#e04a52" /></>],
    ["记事", "u", <><rect width="24" height="24" rx="3" fill="#f49a1c" /><path d="M4 6h13v14H4z" fill="#fff7e0" /><path d="M6 10h8M6 13h7M6 16h5" stroke="#b07a3a" /><path d="M21 2L12 16l-1 3 3-2z" fill="#a03a18" /></>],
    ["GGJ2013", "ua", <><rect width="24" height="24" rx="4" fill="#0c8bf0" /><path d="M9 9.500C4.500 9 3.500 13.500 7 14h10.500c3 0 3-4.500-.5-4.500M12.500 5v12.500c0 2.500-3.500 2.500-3.500 0M12.500 5l2.500 1.500" fill="none" stroke="#fff" strokeWidth="1.800" /></>],
  ];
  return (
    <div className="flex h-10 shrink-0 items-stretch overflow-hidden bg-[#020d11] text-[#e6e6e6]">
      <button aria-label="开始" className="flex w-12 shrink-0 items-center justify-center bg-black">
        <Svg><path d="M0 2.300L6.500 1.400v6.100H0zM7.500 1.200L16 0v7.500H7.500zM0 8.500h6.500v6.100L0 13.700zM7.500 8.500H16V16l-8.500-1.200z" fill="#fff" /></Svg>
      </button>
      <label className="flex w-[344px] shrink-0 items-center gap-[5px] bg-[#333] pr-3 pl-2">
        <svg width="23" height="23" viewBox="0 0 23 23" aria-hidden="true"><circle cx="11.500" cy="11.500" r="9.500" fill="none" stroke="#f2f2f2" strokeWidth="2.400" /></svg>
        <input aria-label="搜索" placeholder="在这里输入你要搜索的内容" className="min-w-0 flex-1 bg-transparent text-sm outline-none placeholder:text-[#999]" />
        <Svg><path d="M5.500 1h5v9h-5zM3 8v4.500h10V8M8 12.500V16" stroke="#aaa" /></Svg>
      </label>
      <div className="flex shrink-0">
        <button aria-label="风扇" className="flex w-[52px] items-center justify-center">
          <svg width="22" height="24" viewBox="0 0 22 24" fill="#e3e3e3">
            <rect x="1" y="1" width="9.500" height="10.500" rx="4" />
            <rect x="11.500" y="1" width="9.500" height="10.500" rx="4" />
            <rect x="1" y="12.500" width="9.500" height="10.500" rx="4" />
            <rect x="11.500" y="12.500" width="9.500" height="10.500" rx="4" />
            <path d="M11 12C7 12 4 10 4 6M11 12c0-4 2-7 6-7M11 12c4 0 7 2 7 6M11 12c0 4-2 7-6 7" fill="none" stroke="#020d11" strokeWidth="1.200" />
          </svg>
        </button>
        <button aria-label="提醒" className="flex w-12 items-center justify-center">
          <svg width="28" height="28" viewBox="0 0 28 28" fill="none"><path d="M17 8C10 3 2 8 2 15s7 10 12 8 6-8 2-11-9 0-8 4 6 3 5 0M19 12c2 6-1 11-7 13" stroke="#d8d8d8" strokeWidth="1.500" /><path d="M22 1c-3 0-4 3-4 5s-1 3-2 4h12c-1-1-2-2-2-4s-1-5-4-5zM20 11h4l-2 2z" fill="#f0b010" /></svg>
        </button>
        <span className="mx-2 flex w-2 justify-center gap-[3px] py-3"><Sep h="h-4 opacity-40" /><Sep h="h-4 opacity-40" /></span>
      </div>
      <div className="flex shrink-0">
        {apps.map(([name, f, art]) => (
          <button key={name} aria-label={name} className={"flex w-[49px] flex-col items-center pt-2 " + (f === "ua" ? "bg-[#353d40]" : "")}>
            <svg width="24" height="24" viewBox="0 0 24 24">{art}</svg>
            {f && <span className={"mt-auto h-0.5 bg-[#76b9ed] " + (f === "ua" ? "w-full" : "w-10")} />}
          </button>
        ))}
      </div>
      <div className="ml-auto flex shrink-0 items-center">
        <div className="mr-5 text-center leading-[17px]">11%<br />CPU使用</div>
        <div className="flex items-center gap-2">
          <Svg><path d="M2.500 10.500L8 5l5.500 5.500" stroke="#eee" strokeWidth="1.200" /></Svg>
          <Svg><path d="M4.500 5.500h10v7h-9M15 8v2M1.500 2v4c0 2 3 2 3 0V2M0 4.500h6M3 7v6" stroke="#eee" /><path d="M7 7h6v4H7z" fill="#eee" /></Svg>
          <Svg><path d="M2 15C2 8 8 3 15 3M5 15c0-5 4-9 10-9M8 15c0-3 3-6 7-6" stroke="#aaa" strokeWidth="1.200" /><circle cx="13" cy="13.500" r="1.700" fill="#eee" /></Svg>
          <Svg><path d="M1 5.500h3l3.500-3v11l-3.500-3H1zM9.500 5.500c1.500 2 1.500 3 0 5M11.500 4c2 3 2 5 0 8M13.500 2.500c3 4 3 7 0 11" stroke="#ddd" /></Svg>
          <span className="text-sm">中</span>
        </div>
        <span className="mr-[18px] ml-3 flex"><Svg><path d="M0 2L14 0l2 14-14 2z" fill="#f04e1c" /><path d="M12.500 4.500C9 3 5 4 5 6c0 3 7 1.500 6.500 4-.5 2-4 2-7 1" stroke="#fff" strokeWidth="2.200" /></Svg></span>
        <div className="w-[58px] text-center leading-[18px] whitespace-nowrap">12:59<br />2017/7/12</div>
        <button aria-label="操作中心" className="flex w-14 items-center justify-center">
          <svg width="18" height="18" viewBox="0 0 18 18" fill="none"><path d="M1.500 1.500h15v12h-5L9 16l-2-2.500H1.500z" stroke="#eee" strokeWidth="1.200" /></svg>
        </button>
        <span className="mr-1 h-10 w-px bg-[#555]" />
      </div>
    </div>
  );
}

export default function App() {
  return (
    <div className={"relative flex h-screen flex-col overflow-hidden bg-[#f0f0f0] text-xs text-black " + UI}>
      <TitleBar />
      <MenuBar />
      <MainToolbar />
      <main className="flex min-h-0 flex-1">
        <NavPanel />
        <div className="ml-1.5 flex min-w-0 flex-1">
          <div className="flex min-w-0 flex-1 flex-col">
            <div className={"flex h-[29px] shrink-0 items-center gap-[7px] overflow-hidden pl-[5px] whitespace-nowrap " + BAR}>
              <Tool icon="newitem" caret>新建</Tool>
              <span className="-ml-0.5"><Tool icon="del">删除</Tool></span>
              <Tool icon="copy">复制</Tool>
              <Tool icon="rename">重命名</Tool>
              <Sep />
              <label htmlFor="floor" className="-ml-1">楼层</label>
              <select id="floor" className="h-[26px] w-[60px] shrink-0 appearance-none bg-white pl-0.5"><option>第2层</option></select>
            </div>
            <div className="flex min-h-0 flex-1">
              <ComponentList />
              <PropertyPanel />
            </div>
          </div>
          <SectionWindow />
          <div className="flex w-[22px] shrink-0 flex-col pb-1">
            <div className={"h-[27px] shrink-0 " + BAR} />
            <div className="mr-[3px] h-[21px] shrink-0 border-r border-b border-[#d9d9d9] bg-white" />
            <div className="mt-1 mr-1 flex flex-1 flex-col items-center border-t border-r border-b border-[#a0a0a0] bg-[#f0f0f0] pr-0.5">
              <span className="flex h-5 items-center"><Chev d="up" /></span>
              <span className="w-full flex-[13] bg-[#cdcdcd]" />
              <span className="flex-5" />
              <span className="flex h-5 items-center"><Chev /></span>
            </div>
          </div>
        </div>
      </main>
      <StatusBar />
      <Taskbar />
      <InputMethodBar />
      <div className="absolute -top-[27px] right-[134px] flex size-[46px] items-end justify-center rounded-full border-[3px] border-[#c9d3cc] bg-[#35c45c] pb-px text-xs font-bold text-white shadow">74</div>
      <GridDialog />
    </div>
  );
}
